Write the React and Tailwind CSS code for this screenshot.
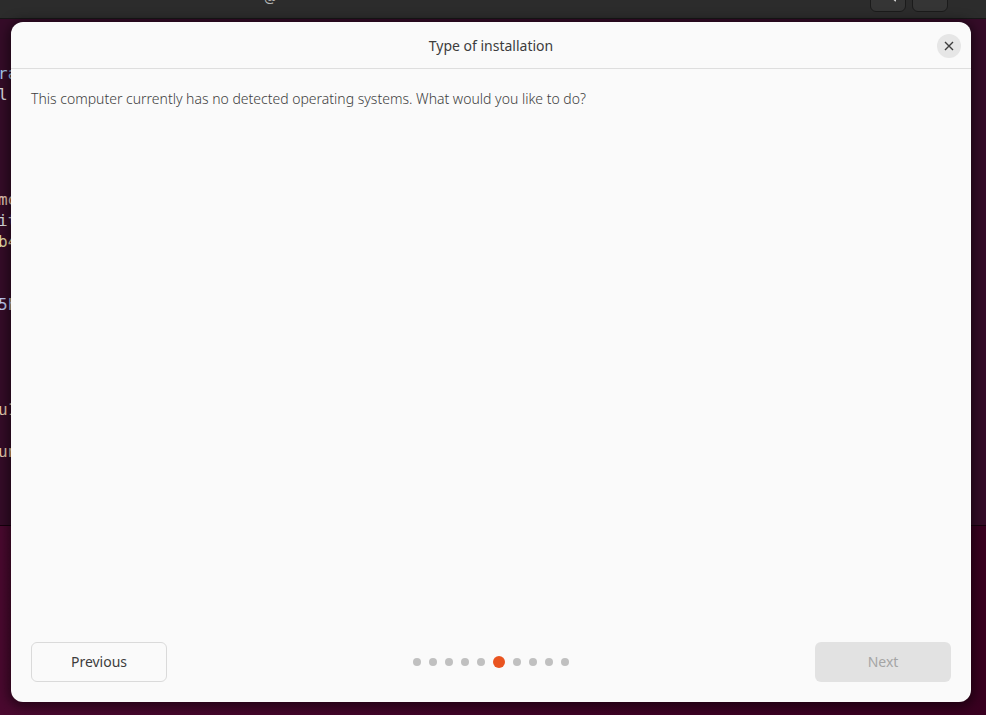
import React from "react";

const TERMINAL_ROWS = [
  "", "", "ra", "l", "", "", "", "", "mo", "it", "b4", "",
  "", "5h", "", "", "", "", "u1", "", "un", "", "", "",
];

const ROW_COLORS = {
  2: "text-[#a9cdf0]",
  8: "text-[#e8c9b4]",
  10: "text-[#e6dca8]",
  13: "text-[#c3d0f5]",
  18: "text-[#e8cdb0]",
  20: "text-[#e8cdb0]",
};

const STEP_COUNT = 10;
const CURRENT_STEP = 5;

const Terminal = () => (
  <div aria-hidden="true">
    <div className="flex h-[19px] items-end justify-between overflow-hidden border-b border-[#171717] bg-[#2c2c2c] pr-[38px] pb-[6px] pl-[264px]">
      <span className="pb-[6px] font-['Noto_Sans'] text-sm leading-4 text-[#b5b5b5]">@</span>
      <div className="flex shrink-0 gap-[6px]">
        <div className="flex h-9 w-9 items-end justify-center rounded-md border border-[#1b1b1b] bg-[#353535] pb-[9px]">
          <svg width="16" height="16" viewBox="0 0 16 16" fill="none" stroke="#d0d0d0" strokeWidth="2">
            <circle cx="7" cy="6" r="4" />
            <path d="M10 9l6 6" />
          </svg>
        </div>
        <div className="h-9 w-9 rounded-md border border-[#1b1b1b] bg-[#353535]" />
      </div>
    </div>
    <pre className="overflow-hidden border-b border-[#16000d] bg-[#350c28] pt-[2px] font-['DejaVu_Sans_Mono',monospace] text-base leading-[21px] text-[#dedede]">
      {TERMINAL_ROWS.map((row, i) => (
        <div key={i} className={`-ml-0.5 h-[21px] ${ROW_COLORS[i] || ""}`}>
          {row}
        </div>
      ))}
    </pre>
  </div>
);

const StepDots = () => (
  <div className="flex items-center gap-2" role="img" aria-label="Step 6 of 10">
    {Array.from({ length: STEP_COUNT }, (_, i) => (
      <span
        key={i}
        className={
          i === CURRENT_STEP
            ? "h-3 w-3 rounded-full bg-[#e95420]"
            : "h-2 w-2 rounded-full bg-[#c0c0c0]"
        }
      />
    ))}
  </div>
);

const InstallerWindow = () => (
  <section className="absolute inset-x-0 top-[22px] bottom-[13px] mr-[15px] ml-[11px] flex flex-col rounded-xl bg-[#fafafa] font-['Noto_Sans',sans-serif] text-sm text-[#3d3d3d] shadow-[0_2px_12px_3px_rgba(0,0,0,0.5)]">
    <header className="grid h-[47px] shrink-0 grid-cols-[1fr_auto_1fr] items-center border-b border-[#dedede] px-[10px] pt-[2px]">
      <h1 className="col-start-2">Type of installation</h1>
      <button
        type="button"
        aria-label="Close"
        className="flex h-6 w-6 items-center justify-center justify-self-end rounded-full bg-[#e6e6e6]"
      >
        <svg width="10" height="10" viewBox="0 0 10 10" fill="none" stroke="#3d3d3d" strokeWidth="1.4">
          <path d="M1 1l8 8M9 1L1 9" />
        </svg>
      </button>
    </header>

    <main className="flex-1 px-5 py-5">
      <p className="leading-5 font-[350]">
        This computer currently has no detected operating systems. What would you like to do?
      </p>
    </main>

    <footer className="flex items-center justify-between px-5 pb-5">
      <button type="button" className="h-10 w-[136px] rounded-md border border-[#dadada]">
        Previous
      </button>
      <StepDots />
      <button type="button" disabled className="h-10 w-[136px] rounded-md bg-[#e2e2e2] text-[#a5a5a5]">
        Next
      </button>
    </footer>
  </section>
);

export default function App() {
  return (
    <div className="relative min-h-screen overflow-hidden bg-gradient-to-r from-[#4a092f] to-[#390020]">
      <Terminal />
      <InstallerWindow />
    </div>
  );
}
